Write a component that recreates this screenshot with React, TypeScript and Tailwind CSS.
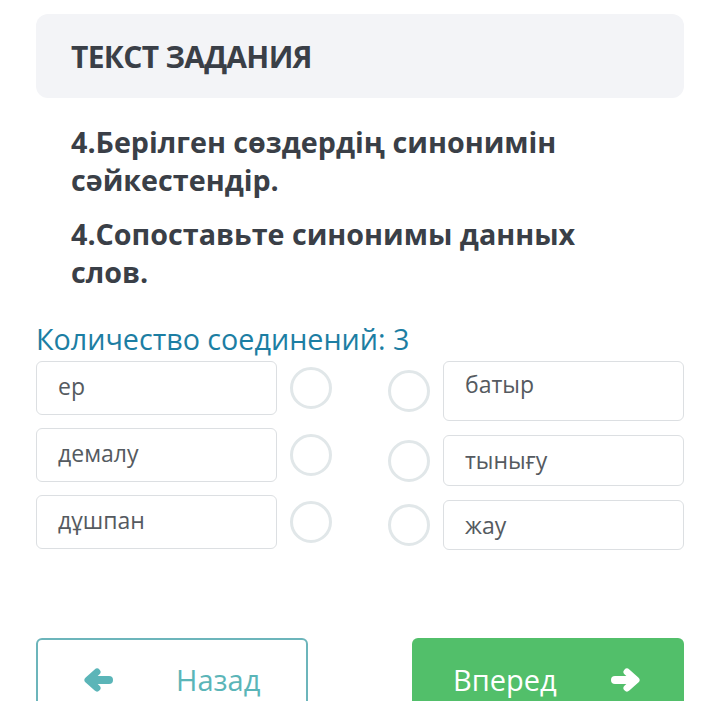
const LEFT = ['ер', 'демалу', 'дұшпан'];
const RIGHT = [
  { word: 'батыр', box: 'h-[60px] pt-[5px]' },
  { word: 'тынығу', box: 'h-[51px] flex items-center' },
  { word: 'жау', box: 'h-[50px] flex items-center' },
];

function Circle() {
  return <div className="h-[42px] w-[42px] shrink-0 rounded-full border-[3px] border-[#e1e7e9]" />;
}

// chunky arrow, pointing left; flipped for the "next" button
function Arrow({ flip = false }: { flip?: boolean }) {
  return (
    <svg
      width="30"
      height="24"
      viewBox="0 0 30 24"
      className={flip ? '-scale-x-100' : ''}
      fill="none"
      stroke="currentColor"
      strokeLinecap="round"
      strokeLinejoin="round"
    >
      <polyline points="13,4 4,12 13,20" strokeWidth="7" />
      <line x1="6" y1="12" x2="25" y2="12" strokeWidth="8" />
    </svg>
  );
}

export default function App() {
  return (
    <div className="h-[701px] overflow-hidden bg-white px-9 pt-[14px] font-['Open_Sans',sans-serif] text-[#3a3f47]">
      <div className="flex h-[84px] items-center rounded-xl bg-[#f3f4f7] px-[35px]">
        <h1 className="text-[30px] font-bold tracking-[-0.7px] text-[#3a3f47]">ТЕКСТ ЗАДАНИЯ</h1>
      </div>

      <div className="px-[35px] pt-[25px] text-[28.7px] font-bold leading-[38px]">
        <p>4.Берілген сөздердің синонимін сәйкестендір.</p>
        <p className="mt-[16px]">4.Сопоставьте синонимы данных слов.</p>
      </div>

      <p className="mt-[30px] text-[28.7px] leading-[36px] text-[#1c7ea3]">Количество соединений: 3</p>

      <div className="mt-[4px] flex justify-between">
        <div className="flex flex-col gap-[13px]">
          {LEFT.map((w) => (
            <div key={w} className="flex items-center gap-[13px]">
              <div className="flex h-[54px] w-[241px] items-center rounded-md border border-[#dcdfe2] px-[21px] pb-[3px] text-[23px] text-[#555a60]">
                {w}
              </div>
              <Circle />
            </div>
          ))}
        </div>

        <div className="flex flex-col gap-[14px]">
          {RIGHT.map((r) => (
            <div key={r.word} className="flex items-center gap-[13px]">
              <Circle />
              <div
                className={`${r.box} w-[241px] rounded-md border border-[#dcdfe2] px-[21px] text-[23px] text-[#555a60]`}
              >
                {r.word}
              </div>
            </div>
          ))}
        </div>
      </div>

      <div className="mt-[88px] flex justify-between">
        <button className="flex h-[84px] w-[272px] shrink-0 items-center rounded-md border-2 border-[#6cb5bb] pl-[46px] text-[29px] text-[#5bb5b8]">
          <Arrow />
          <span className="ml-[62px]">Назад</span>
        </button>
        <button className="flex h-[84px] w-[272px] shrink-0 items-center rounded-md bg-[#52bf6a] pl-[41px] text-[29px] text-white">
          <span>Вперед</span>
          <span className="ml-[53px]">
            <Arrow flip />
          </span>
        </button>
      </div>
    </div>
  );
}
